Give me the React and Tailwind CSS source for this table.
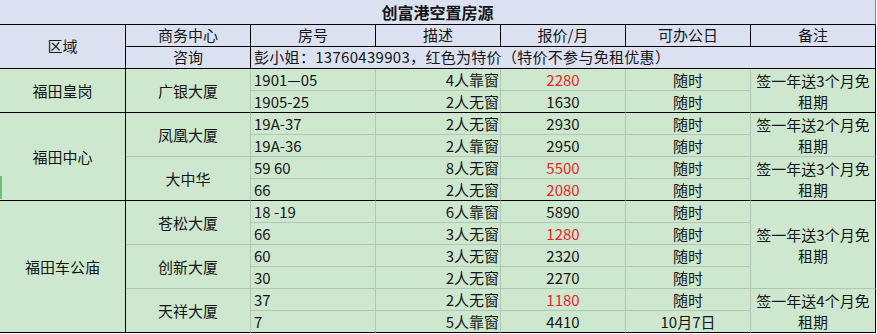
import React from "react";

const G = "border-[#b3c5b4]";

const rows = [
  { room: "1901—05", desc: "4人靠窗", price: "2280", red: true, day: "随时", rs: "row-start-4", end: false },
  { room: "1905-25", desc: "2人无窗", price: "1630", red: false, day: "随时", rs: "row-start-5", end: true },
  { room: "19A-37", desc: "2人无窗", price: "2930", red: false, day: "随时", rs: "row-start-6", end: false },
  { room: "19A-36", desc: "2人靠窗", price: "2950", red: false, day: "随时", rs: "row-start-7", end: false },
  { room: "59 60", desc: "8人无窗", price: "5500", red: true, day: "随时", rs: "row-start-8", end: false },
  { room: "66", desc: "2人无窗", price: "2080", red: true, day: "随时", rs: "row-start-9", end: true },
  { room: "18 -19", desc: "6人靠窗", price: "5890", red: false, day: "随时", rs: "row-start-10", end: false },
  { room: "66", desc: "3人无窗", price: "1280", red: true, day: "随时", rs: "row-start-11", end: false },
  { room: "60", desc: "3人无窗", price: "2320", red: false, day: "随时", rs: "row-start-12", end: false },
  { room: "30", desc: "2人无窗", price: "2270", red: false, day: "随时", rs: "row-start-13", end: false },
  { room: "37", desc: "2人无窗", price: "1180", red: true, day: "随时", rs: "row-start-14", end: false },
  { room: "7", desc: "5人靠窗", price: "4410", red: false, day: "10月7日", rs: "row-start-15", end: true },
];

function Remark({ cls, num }) {
  return (
    <div className={`col-start-7 border-r border-r-black border-b flex items-center justify-center text-center leading-[21px] pt-px ${cls}`}>
      {num ? (
        <span>
          签一年送{num}个月免
          <br />
          租期
        </span>
      ) : null}
    </div>
  );
}

export default function App() {
  return (
    <div className="relative w-[877px] h-[334px] bg-white overflow-hidden">
      <div
        className="grid grid-cols-[126px_125px_125px_125px_125px_125px_125px] grid-rows-[25px_22px_22px_22px_22px_22px_22px_22px_22px_22px_22px_22px_22px_22px_22px] text-[15px] text-[#151515]"
        style={{ fontFamily: '"Noto Sans CJK SC", "Noto Sans", sans-serif' }}
      >
        {/* Title */}
        <div className="col-start-1 col-span-7 row-start-1 bg-[#dbe1f1] border-b border-b-black border-r border-r-[#8a8a8a] flex items-center justify-center font-bold text-[16px]">
          创富港空置房源
        </div>

        {/* Header */}
        <div className="col-start-1 row-start-2 row-span-2 bg-[#dbe1f1] border-r border-r-black border-b border-b-black flex items-center justify-center">
          区域
        </div>
        <div className="col-start-2 row-start-2 bg-[#dbe1f1] border-r border-r-black border-b border-b-black flex items-center justify-center">
          商务中心
        </div>
        <div className="col-start-3 row-start-2 bg-[#dbe1f1] border-r border-r-black border-b border-b-black flex items-center justify-center">
          房号
        </div>
        <div className="col-start-4 row-start-2 bg-[#dbe1f1] border-r border-r-black border-b border-b-black flex items-center justify-center">
          描述
        </div>
        <div className="col-start-5 row-start-2 bg-[#dbe1f1] border-r border-r-black border-b border-b-black flex items-center justify-center">
          报价/月
        </div>
        <div className="col-start-6 row-start-2 bg-[#dbe1f1] border-r border-r-black border-b border-b-black flex items-center justify-center">
          可办公日
        </div>
        <div className="col-start-7 row-start-2 bg-[#dbe1f1] border-r border-r-black border-b border-b-black flex items-center justify-center">
          备注
        </div>
        <div className="col-start-2 row-start-3 bg-[#dbe1f1] border-r border-r-black border-b border-b-black flex items-center justify-center">
          咨询
        </div>
        <div className="col-start-3 col-span-5 row-start-3 bg-[#dbe1f1] border-r border-r-black border-b border-b-black flex items-center pl-[3px] whitespace-nowrap tracking-[0.3px]">
          彭小姐：13760439903，红色为特价（特价不参与免租优惠）
        </div>

        {/* 区域 */}
        <div className="col-start-1 row-start-4 row-span-2 bg-[#cde8cf] border-r border-r-black border-b border-b-black flex items-center justify-center pt-px">
          福田皇岗
        </div>
        <div className="col-start-1 row-start-6 row-span-4 bg-[#cde8cf] border-r border-r-black border-b border-b-black flex items-center justify-center pt-px">
          福田中心
        </div>
        <div className="col-start-1 row-start-10 row-span-6 bg-[#cde8cf] border-r border-r-black border-b border-b-black flex items-center justify-center pt-px">
          福田车公庙
        </div>

        {/* 商务中心 */}
        <div className={`col-start-2 row-start-4 row-span-2 bg-[#cde8cf] border-r ${G} border-b border-b-black flex items-center justify-center pt-px`}>
          广银大厦
        </div>
        <div className={`col-start-2 row-start-6 row-span-2 bg-[#cde8cf] border-r border-b ${G} flex items-center justify-center pt-px`}>
          凤凰大厦
        </div>
        <div className={`col-start-2 row-start-8 row-span-2 bg-[#cde8cf] border-r ${G} border-b border-b-black flex items-center justify-center pt-px`}>
          大中华
        </div>
        <div className={`col-start-2 row-start-10 row-span-2 bg-[#cde8cf] border-r border-b ${G} flex items-center justify-center pt-px`}>
          苍松大厦
        </div>
        <div className={`col-start-2 row-start-12 row-span-2 bg-[#cde8cf] border-r border-b ${G} flex items-center justify-center pt-px`}>
          创新大厦
        </div>
        <div className={`col-start-2 row-start-14 row-span-2 bg-[#cde8cf] border-r ${G} border-b border-b-black flex items-center justify-center pt-px`}>
          天祥大厦
        </div>

        {/* Data cells */}
        {rows.map((r, i) => {
          const bb = r.end ? "border-b-black" : "border-b-[#b3c5b4]";
          return (
            <React.Fragment key={i}>
              <div className={`col-start-3 ${r.rs} bg-[#cde8cf] border-r border-r-[#b3c5b4] border-b ${bb} flex items-center pl-[3px] pt-px whitespace-nowrap`}>
                {r.room}
              </div>
              <div className={`col-start-4 ${r.rs} bg-[#cde8cf] border-r border-r-[#b3c5b4] border-b ${bb} flex items-center justify-end pr-[1px] pt-px whitespace-nowrap`}>
                {r.desc}
              </div>
              <div className={`col-start-5 ${r.rs} bg-[#cde8cf] border-r border-r-[#b3c5b4] border-b ${bb} flex items-center justify-center pt-px ${r.red ? "text-[#ec2426]" : ""}`}>
                {r.price}
              </div>
              <div className={`col-start-6 ${r.rs} bg-[#cde8cf] border-r border-r-[#b3c5b4] border-b ${bb} flex items-center justify-center pt-px whitespace-nowrap`}>
                {r.day}
              </div>
            </React.Fragment>
          );
        })}

        {/* 备注 */}
        <Remark cls="row-start-4 row-span-2 bg-[#cde8cf] border-b-black" num="3" />
        <Remark cls="row-start-6 row-span-2 bg-[#cde8cf] border-b-[#b3c5b4]" num="2" />
        <Remark cls="row-start-8 row-span-2 bg-[#cde8cf] border-b-black" num="3" />
        <Remark cls="row-start-10 row-span-4 bg-[#cde8cf] border-b-[#b3c5b4]" num="3" />
        <Remark cls="row-start-14 row-span-2 bg-[#cde8cf] border-b-black" num="4" />
      </div>

      {/* selected-row marker on the left edge */}
      <div className="absolute left-0 top-[176px] w-[2px] h-[23px] bg-[#6fbf72]" />
    </div>
  );
}
